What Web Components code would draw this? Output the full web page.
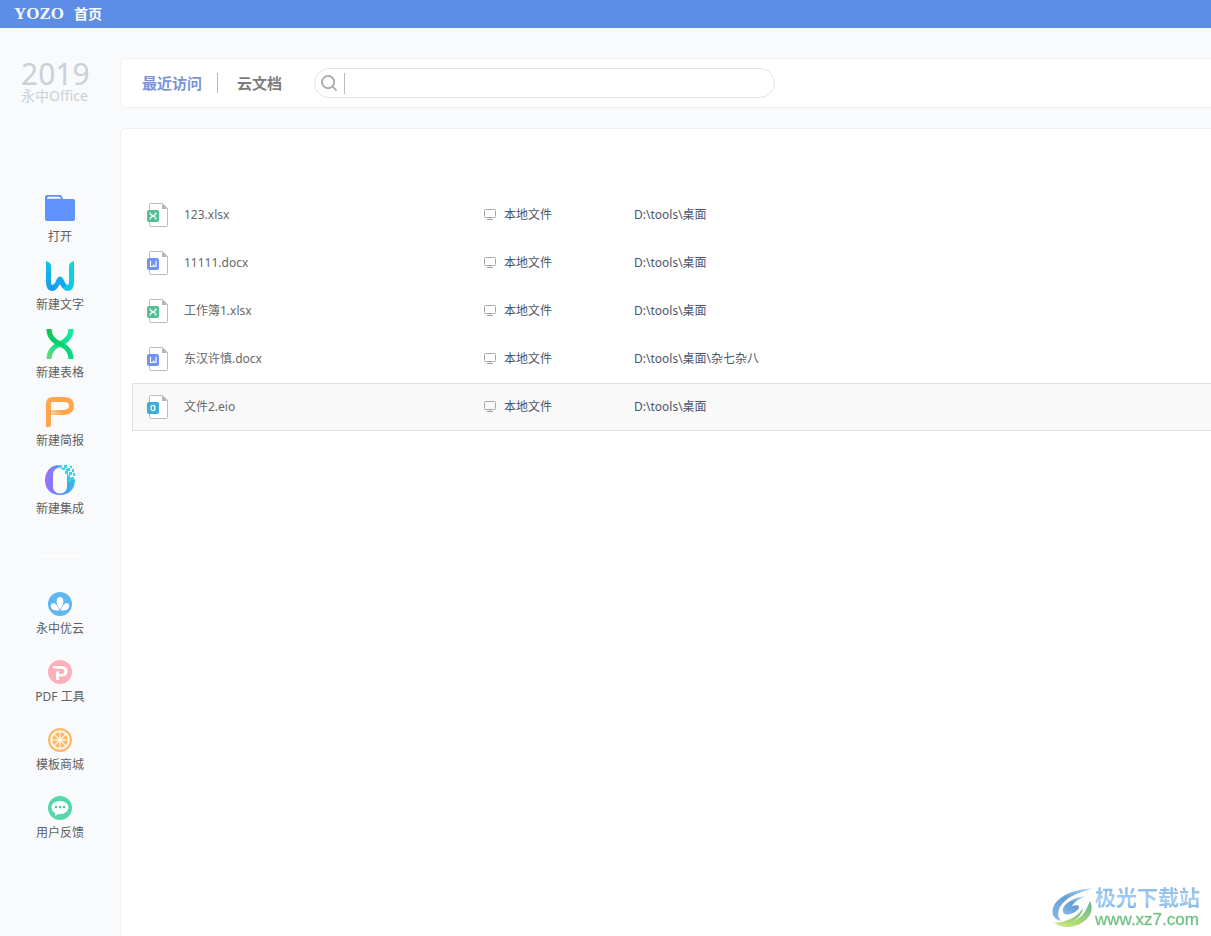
<!DOCTYPE html>
<html lang="zh-CN">
<head>
<meta charset="utf-8">
<title>YOZO 首页</title>
<style>
  body { margin: 0; background: #f9fafc; font: 12px/16px "Noto Sans", "Noto Sans CJK SC", sans-serif; color: #606060; }
</style>
</head>
<body>
<yozo-app></yozo-app>

<template id="t-app">
  <style>
    :host { display: flex; flex-direction: column; min-height: 100vh; }
    .body { flex: 1; display: grid; grid-template-columns: 120px minmax(0, 1fr); }
    main { display: flex; flex-direction: column; gap: 20px; padding-top: 30px; }
    file-panel { flex: 1; }
    site-mark { position: fixed; right: 11px; bottom: 6px; }
  </style>
  <title-bar></title-bar>
  <div class="body">
    <side-bar></side-bar>
    <main>
      <nav-panel></nav-panel>
      <file-panel></file-panel>
    </main>
  </div>
  <site-mark></site-mark>
</template>

<template id="t-title">
  <style>
    :host { display: flex; align-items: center; gap: 10px; height: 28px; padding-left: 14px; background: #5e8de7; color: #fff; }
    .brand { font: bold 17px/28px "Liberation Serif", serif; color: #f2fbff; }
    .page { font-size: 14px; line-height: 28px; font-weight: bold; }
  </style>
  <span class="brand">YOZO</span><span class="page">首页</span>
</template>

<template id="t-side">
  <style>
    :host { display: flex; flex-direction: column; }
    .logo { padding: 32px 0 0 21px; color: #cbd0d8; }
    .year { font-size: 30px; line-height: 28px; }
    .product { font-size: 14px; line-height: 16px; }
    nav { display: flex; flex-direction: column; align-items: center; gap: 15px; }
    .create { padding-top: 88px; --icon: 32px; --gap: 5px; }
    .tools { gap: 23px; --icon: 24px; --gap: 5px; }
    hr { width: 40px; height: 1px; border: 0; margin: 38px auto 36px; background: #fff; }
  </style>
  <div class="logo"><div class="year">2019</div><div class="product">永中Office</div></div>
  <nav class="create">
    <side-button icon="open">打开</side-button>
    <side-button icon="word">新建文字</side-button>
    <side-button icon="sheet">新建表格</side-button>
    <side-button icon="slides">新建简报</side-button>
    <side-button icon="suite">新建集成</side-button>
  </nav>
  <hr>
  <nav class="tools">
    <side-button icon="cloud">永中优云</side-button>
    <side-button icon="pdf">PDF 工具</side-button>
    <side-button icon="store">模板商城</side-button>
    <side-button icon="feedback">用户反馈</side-button>
  </nav>
</template>

<template id="t-side-button">
  <style>
    :host { display: block; }
    button { display: flex; flex-direction: column; align-items: center; gap: var(--gap); border: 0; padding: 0; background: none; font: inherit; color: inherit; white-space: nowrap; cursor: pointer; }
    app-icon { width: var(--icon); height: var(--icon); }
  </style>
  <button type="button"><app-icon></app-icon><span><slot></slot></span></button>
</template>

<template id="t-nav">
  <style>
    :host { display: flex; align-items: center; box-sizing: border-box; height: 50px; padding-left: 21px; background: #fff; border: 1px solid #eff0f2; border-right: 0; border-radius: 5px 0 0 5px; font-size: 15px; line-height: 20px; }
    a { color: #7c7c7c; font-weight: bold; text-decoration: none; white-space: nowrap; }
    a.on { color: #7b93da; }
    .bar { width: 1px; height: 20px; margin: 0 19px 0 15px; background: #bbb; }
    search-box { flex: 0 1 461px; margin: 0 16px 0 32px; }
  </style>
  <a class="on" href="#recent">最近访问</a><span class="bar"></span><a href="#cloud">云文档</a>
  <search-box></search-box>
</template>

<template id="t-search">
  <style>
    :host { display: flex; align-items: center; box-sizing: border-box; height: 30px; padding: 0 16px 0 6px; border: 1px solid #e3e3e3; border-radius: 15px; background: #fff; }
    label { display: flex; padding-right: 7px; border-right: 1px solid #bbb; height: 21px; align-items: center; }
    svg { display: block; width: 16px; height: 16px; }
    input { flex: 1; min-width: 0; border: 0; outline: 0; padding: 0 8px; background: none; font: inherit; color: #555; }
  </style>
  <label for="q" aria-label="搜索"><svg viewBox="0 0 18 18" fill="none" stroke="#a9a9a9" stroke-width="2"><circle cx="8" cy="8" r="6.900"/><path d="M13 13l4.500 4.500"/></svg></label>
  <input id="q" type="text">
</template>

<template id="t-files">
  <style>
    :host { display: block; box-sizing: border-box; padding: 62px 0 0 11px; background: #fff; border: solid #eff0f2; border-width: 1px 0 0 1px; border-radius: 5px 0 0 0; }
    table { width: 100%; border-spacing: 0; table-layout: fixed; }
    td { height: 46px; padding: 0; border: 1px solid transparent; border-width: 1px 0; white-space: nowrap; }
    td:first-child { width: 351px; border-left-width: 1px; }
    td:nth-child(2) { width: 150px; }
    td div { display: flex; align-items: center; }
    tr.on td { background: #f9f9f9; border-color: #e2e2e2; }
    .name div { gap: 15px; padding-left: 13px; color: #686868; }
    .name app-icon { width: 23px; height: 26px; }
    .place div { gap: 8px; }
    .place app-icon { width: 12px; height: 14px; }
    .place, .path { color: #4a566a; }
  </style>
  <table><tbody></tbody></table>
</template>

<template id="t-mark">
  <style>
    :host { display: flex; align-items: center; }
    svg { width: 44px; height: 42px; display: block; }
    .cn { font: bold 21px/24px "Liberation Sans", "Noto Sans CJK SC", sans-serif; color: transparent; background: linear-gradient(#8ab6e6, #a9d2f0 60%, #72ace0); background-clip: text; -webkit-background-clip: text; }
    .url { font: 17px/20px "Liberation Sans", sans-serif; color: #6bbf7c; -webkit-text-stroke: 1px #6bbf7c44; }
  </style>
  <svg viewBox="0 0 45 42">
    <defs>
      <linearGradient id="a" x1="1" y1="0" x2="0" y2="1"><stop offset="0" stop-color="#b2dcf4"/><stop offset=".5" stop-color="#649ed6"/><stop offset="1" stop-color="#84bce6"/></linearGradient>
      <linearGradient id="b" x1="1" y1="0" x2="0" y2="1"><stop offset="0" stop-color="#62b796"/><stop offset=".6" stop-color="#a9d774"/><stop offset="1" stop-color="#dcec8a"/></linearGradient>
    </defs>
    <path fill="url(#a)" d="M43 1C30 1 15 5 6 14C-1 22 0 32 10 34C5 29 7 20 14 14C22 7 32 4 43 1Z"/>
    <path fill="url(#a)" d="M35 9C23 10 12 17 12 24C13 30 22 28 27 23C31 19 28 17 21 19C25 14 30 11 35 9Z"/>
    <path fill="url(#b)" d="M40 14C45 24 38 35 25 39C16 42 9 40 6 38C16 38 28 34 33 27C36 23 38 18 40 14Z"/>
    <path fill="url(#b)" d="M2 36C15 36 26 31 33 21C31 31 21 38 9 39Z"/>
  </svg>
  <div><div class="cn">极光下载站</div><div class="url">www.xz7.com</div></div>
</template>

<script>
  const sheet = (colour, mark) => `<svg viewBox="0 0 23 26"><path d="M3.500 7V2.500a1 1 0 0 1 1-1H16.500L21.500 6.500V23.500a1 1 0 0 1-1 1H4.500a1 1 0 0 1-1-1V20" fill="#fff" stroke="#bcbcbc"/><path d="M3.500 6V21" stroke="#bcbcbc"/><path d="M16 1.500V7H21.500Z" fill="#b5b5b5"/><rect x="1" y="8" width="12" height="12" rx="2" fill="${colour}"/><g fill="none" stroke="#fff" stroke-width="1.200" stroke-linecap="round" stroke-linejoin="round">${mark}</g></svg>`;

  const icons = {
    open: `<svg viewBox="0 0 32 32"><path d="M1 8V5a2 2 0 0 1 2-2H16q2 0 2 2l1 2H29a2 2 0 0 1 2 2V27a2 2 0 0 1-2 2H3a2 2 0 0 1-2-2Z" fill="#5f93fb"/><path d="M3 6.500Q3 4.700 5 4.700H14.500Q16.500 4.700 17 6.700H3Z" fill="#f9fafc"/></svg>`,
    word: `<svg viewBox="0 0 32 32"><defs><linearGradient id="w" x1="0" y1="0" x2="0" y2="1"><stop offset="0" stop-color="#00e0cf"/><stop offset="1" stop-color="#16c3ea"/></linearGradient><linearGradient id="v" x1="0" y1="0" x2="0" y2="1"><stop offset="0" stop-color="#12c2e6"/><stop offset="1" stop-color="#1799f3"/></linearGradient></defs><path d="M30 1Q25 2.500 25 6V21Q25 25 23.500 25Q22 25 20.500 22L18.500 18.500L14.500 22L19 28.500Q21 31 24 31Q30 30.500 30 22Z" fill="url(#w)"/><path d="M2 1Q7 2.500 7 6V21Q7 25 8.500 25Q10 25 11.500 22L13 18.500Q16 14.500 19 18.500L20.500 22L22 25Q20 28 18 27.500L16 24L13 28.500Q11 31 8 31Q2 30.500 2 22Z" fill="url(#v)"/></svg>`,
    sheet: `<svg viewBox="0 0 32 32"><defs><linearGradient id="s" x1="1" y1="0" x2="0" y2="1"><stop offset="0" stop-color="#19e9a6"/><stop offset=".5" stop-color="#09dc8a"/><stop offset="1" stop-color="#65d980"/></linearGradient><linearGradient id="t" x1="0" y1="0" x2="1" y2="1"><stop offset="0" stop-color="#07c95a"/><stop offset="1" stop-color="#0bdb82"/></linearGradient></defs><g fill="none" stroke-width="5"><path d="M27 1C27 9 23 13 16 16S5 23 5 31" stroke="url(#s)"/><path d="M5 1C5 9 9 13 16 16S27 23 27 31" stroke="url(#t)"/></g></svg>`,
    slides: `<svg viewBox="0 0 32 32"><defs><linearGradient id="p" x1="0" x2="1"><stop stop-color="#ffcf91"/><stop offset="1" stop-color="#ffa550"/></linearGradient></defs><path d="M7 16.500H20Q27.500 16 27.500 10Q27.500 3.500 20 3.500H9Q4.500 3.500 4.500 8V31" fill="none" stroke="#fea64f" stroke-width="5"/><path d="M7 14H18V19H7Z" fill="url(#p)"/><path d="M7.500 28.500Q6.500 31 4 31.500H8Z" fill="#f9fafc"/></svg>`,
    suite: `<svg viewBox="0 0 32 32"><defs><linearGradient id="o" x1="0" x2="1"><stop stop-color="#a16cf6"/><stop offset=".5" stop-color="#5b8bf9"/><stop offset="1" stop-color="#34bce9"/></linearGradient></defs><path fill="url(#o)" fill-rule="evenodd" d="M18 1C6 0 1 8 1 16.500C1 25 7 31 16 31C25 31 31 25 31 16L29 13L26 14L23 9V5H17ZM16 3.500Q22.500 3 23 9V23Q22.500 29 16 29.500Q9.500 29 9 23V10Q9.500 4 16 3.500Z"/><g fill="#35d3e8"><path d="M14 1h4v2h-4zM20 1h3v3h-3zM18 4h3v2h-3zM23 4h3v3h-3zM21 7h3v3h-3zM26 2h2v2h-2zM28 5h2v3h-2zM25 8h3v3h-3zM29 9h2v3h-2zM23 11h3v3h-3zM27 13h3v3h-3zM24 15h3v3h-3z"/></g></svg>`,
    cloud: `<svg viewBox="0 0 24 24"><circle cx="12" cy="12" r="12" fill="#60b7ef"/><g fill="#fff"><path d="M12 17.500C7.500 12 7.500 5 12 5S16.500 12 12 17.500Z"/><path d="M11.300 18.500C10 14 7.500 11 5 11C2.300 12 2.300 16 4.500 17.500C6.500 18.700 9 18.700 11.300 18.500Z"/><path d="M12.700 18.500C14 14 16.500 11 19 11C21.700 12 21.700 16 19.500 17.500C17.500 18.700 15 18.700 12.700 18.500Z"/></g></svg>`,
    pdf: `<svg viewBox="0 0 24 24"><circle cx="12" cy="12" r="12" fill="#fdb0b9"/><path d="M4.500 6H14Q19.500 6.500 19.500 11.500Q19.300 16.500 14 16.500H11V20H8V13Q8.200 11 10.500 11H11V14H14Q16.500 13.800 16.500 11.500Q16.500 9 14 8.800H7Q5 8.500 4.500 6Z" fill="#fff"/></svg>`,
    store: `<svg viewBox="0 0 24 24"><circle cx="12" cy="12" r="10.900" fill="#fff7ea" stroke="#ffb765" stroke-width="2.200"/><g fill="#ffb765">${[0, 45, 90, 135, 180, 225, 270, 315].map(a => `<path transform="rotate(${a + 22} 12 12)" d="M12 10L9.600 4.900Q12 3.300 14.400 4.900Z"/>`).join('')}</g></svg>`,
    feedback: `<svg viewBox="0 0 24 24"><circle cx="12" cy="12" r="12" fill="#55d6ab"/><path d="M12 5C6.500 5 3.500 8 3.500 11.500Q3.500 15 7.500 17L7 20L10.500 18C17 18.500 20.500 15 20.500 11.500C20.500 8 17.500 5 12 5Z" fill="#fff"/><g fill="#43c79b"><circle cx="8" cy="11" r="1.200"/><circle cx="12" cy="11" r="1.200"/><circle cx="16" cy="11" r="1.200"/></g></svg>`,
    xlsx: sheet('#56c093', '<path d="M4 11C4.500 13 5.500 13.500 7 14S9.500 15 10 17M10 11C9.500 13 8.500 13.500 7 14S4.500 15 4 17"/>'),
    docx: sheet('#7290f8', '<path d="M4.500 11V16.500H6.500L7.500 15L8.500 16.500H10V11"/>'),
    eio: sheet('#3facd6', '<ellipse cx="7" cy="14" rx="2" ry="2.600"/>'),
    screen: `<svg viewBox="0 0 12 14" fill="none" stroke="#a8a8a8"><rect x=".5" y="1.500" width="11" height="8" rx="1"/><path d="M3 11.500H9M6 9.500V11" /></svg>`
  };

  const define = (name, templateId, setup) => customElements.define(name, class extends HTMLElement {
    constructor() {
      super();
      this.attachShadow({ mode: 'open' }).append(document.getElementById(templateId).content.cloneNode(true));
      if (setup) setup(this);
    }
  });

  customElements.define('app-icon', class extends HTMLElement {
    static observedAttributes = ['name'];
    constructor() { super(); this.attachShadow({ mode: 'open' }); }
    attributeChangedCallback(_, __, name) {
      this.shadowRoot.innerHTML = `<style>:host{display:block;flex:none}svg{display:block;width:100%;height:100%}</style>${icons[name]}`;
    }
  });

  customElements.define('side-button', class extends HTMLElement {
    connectedCallback() {
      if (this.shadowRoot) return;
      const root = this.attachShadow({ mode: 'open' });
      root.append(document.getElementById('t-side-button').content.cloneNode(true));
      root.querySelector('app-icon').setAttribute('name', this.getAttribute('icon'));
    }
  });

  const files = [
    ['xlsx', '123.xlsx', 'D:\\tools\\桌面'],
    ['docx', '11111.docx', 'D:\\tools\\桌面'],
    ['xlsx', '工作簿1.xlsx', 'D:\\tools\\桌面'],
    ['docx', '东汉许慎.docx', 'D:\\tools\\桌面\\杂七杂八'],
    ['eio', '文件2.eio', 'D:\\tools\\桌面']
  ];

  define('title-bar', 't-title');
  define('search-box', 't-search');
  define('nav-panel', 't-nav');
  define('file-panel', 't-files', el => {
    el.shadowRoot.querySelector('tbody').innerHTML = files.map(([type, name, path]) =>
      `<tr${type === 'eio' ? ' class="on"' : ''}><td class="name"><div><app-icon name="${type}"></app-icon><span>${name}</span></div></td><td class="place"><div><app-icon name="screen"></app-icon><span>本地文件</span></div></td><td class="path">${path}</td></tr>`).join('');
  });
  define('side-bar', 't-side');
  define('site-mark', 't-mark');
  define('yozo-app', 't-app');
</script>
</body>
</html>
